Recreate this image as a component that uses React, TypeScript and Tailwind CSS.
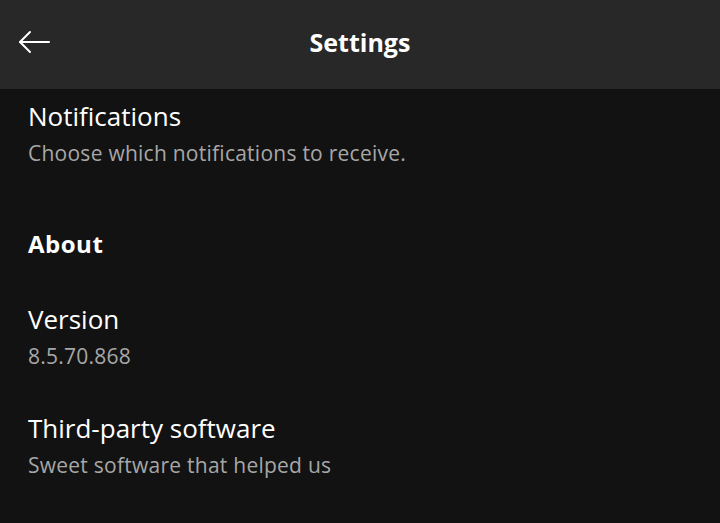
function BackArrow() {
  return (
    <svg width="40" height="32" viewBox="0 0 40 32" fill="none" stroke="#ffffff" strokeWidth="2" strokeLinecap="round" strokeLinejoin="round">
      <path d="M38 16H9" />
      <path d="M19 6L9 16L19 26" />
    </svg>
  );
}

function Item({ title, sub }: { title: string; sub: string }) {
  return (
    <div className="flex flex-col">
      <div className="text-[26px] leading-[32px] text-white">{title}</div>
      <div className="text-[21px] leading-[26px] tracking-[0.25px] text-[#a7a7a7] mt-[8px]">{sub}</div>
    </div>
  );
}

export default function App() {
  return (
    <div
      className="w-[720px] h-[523px] bg-[#121212] overflow-hidden"
      style={{ fontFamily: "'Open Sans', sans-serif" }}
    >
      <header className="h-[89px] bg-[#282828] grid grid-cols-[80px_1fr_80px] items-center">
        <div className="pl-[11px] pb-[5px]">
          <BackArrow />
        </div>
        <h1 className="text-center text-[25px] leading-[32px] font-bold text-white pb-[6px]">Settings</h1>
        <div />
      </header>
      <main className="pl-[28px] pt-[11px] flex flex-col">
        <Item title="Notifications" sub="Choose which notifications to receive." />
        <h2 className="text-[24px] leading-[30px] font-bold tracking-[0.5px] text-white mt-[63px]">About</h2>
        <div className="mt-[44px]">
          <Item title="Version" sub="8.5.70.868" />
        </div>
        <div className="mt-[43px]">
          <Item title="Third-party software" sub="Sweet software that helped us" />
        </div>
      </main>
    </div>
  );
}
